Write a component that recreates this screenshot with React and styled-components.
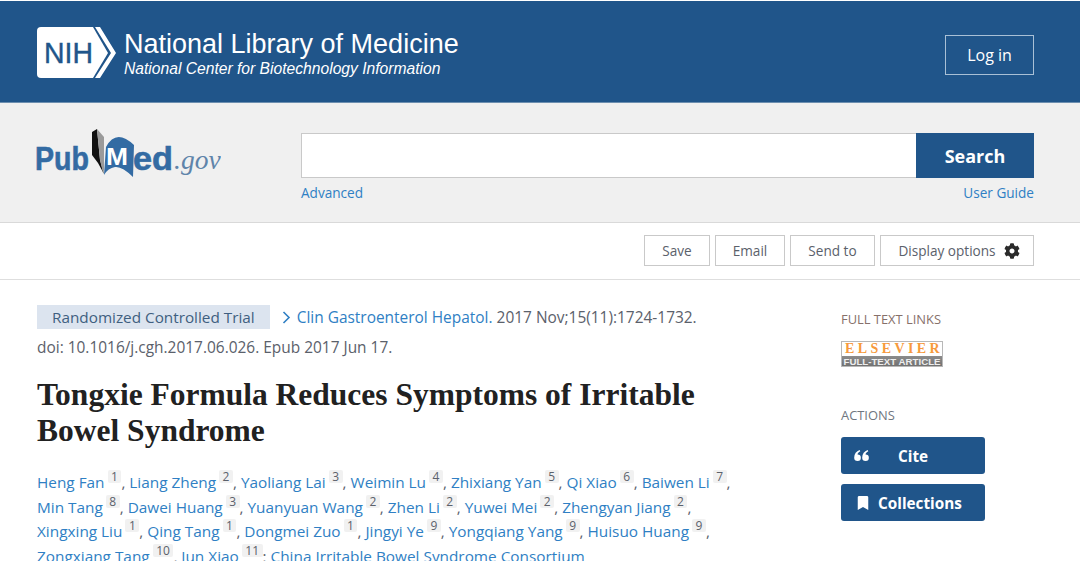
import React from 'react'
import styled, { createGlobalStyle } from 'styled-components'
import { FaBookmark, FaCog } from 'react-icons/fa'

const authors = [
  ['Heng Fan', 1], ['Liang Zheng', 2], ['Yaoliang Lai', 3], ['Weimin Lu', 4], ['Zhixiang Yan', 5],
  ['Qi Xiao', 6], ['Baiwen Li', 7], ['Min Tang', 8], ['Dawei Huang', 3], ['Yuanyuan Wang', 2],
  ['Zhen Li', 2], ['Yuwei Mei', 2], ['Zhengyan Jiang', 2], ['Xingxing Liu', 1], ['Qing Tang', 1],
  ['Dongmei Zuo', 1], ['Jingyi Ye', 9], ['Yongqiang Yang', 9], ['Huisuo Huang', 9],
  ['Zongxiang Tang', 10], ['Jun Xiao', 11],
]

const GlobalStyle = createGlobalStyle`
  html, body {
    margin: 0;
    height: 561px;
    overflow: hidden;
    background: #fff;
    font-family: "Open Sans", "Liberation Sans", sans-serif;
  }
`

const Masthead = styled.header`
  height: 101px;
  margin-top: 1px;
  padding: 0 46px 0 37px;
  background: #20558a;
  border-bottom: 1px solid #6d8fb0;
  display: flex;
  align-items: center;
  justify-content: space-between;
`

const Brand = styled.div`
  display: flex;
  align-items: center;
  gap: 7px;
  margin-top: 2px;
  color: #fff;
  font-family: "Liberation Sans", Arial, sans-serif;
`

const BrandText = styled.div`
  display: flex;
  flex-direction: column;
  margin-top: 2px;
`

const BrandName = styled.span`
  font-size: 27px;
  line-height: 30px;
`

const BrandSub = styled.span`
  margin-top: 1px;
  font-size: 15.65px;
  font-style: italic;
  line-height: 18px;
`

const LoginButton = styled.button`
  width: 89px;
  height: 40px;
  margin-top: 7px;
  padding: 0;
  background: transparent;
  border: 1px solid #a9c0d6;
  color: #fff;
  font: 16px "Open Sans", sans-serif;
`

const SearchBand = styled.section`
  height: 120px;
  padding: 30px 46px 0 35px;
  box-sizing: border-box;
  background: #f0f0f0;
  border-bottom: 1px solid #d9d9d9;
  display: flex;
`

const LogoWrap = styled.div`
  margin-top: -8px;
`

const SearchColumn = styled.div`
  width: 733px;
  margin-left: auto;
`

const SearchRow = styled.div`
  display: flex;
  height: 45px;
`

const SearchInput = styled.input`
  flex: 1;
  min-width: 0;
  box-sizing: border-box;
  background: #fff;
  border: 1px solid #c9c9c9;
  border-right: 0;
`

const SearchButton = styled.button`
  width: 118px;
  padding: 0;
  border: 0;
  background: #20558a;
  color: #fff;
  font: 700 18px "Open Sans", sans-serif;
`

const SearchLinks = styled.div`
  display: flex;
  justify-content: space-between;
  margin-top: 5px;
  font-size: 13.6px;
  line-height: 20px;
`

const Link = styled.a`
  color: #2f7fc4;
  text-decoration: none;
`

const Toolbar = styled.nav`
  height: 57px;
  padding: 0 46px 1px 0;
  box-sizing: border-box;
  border-bottom: 1px solid #dedede;
  display: flex;
  align-items: center;
  justify-content: flex-end;
  gap: 5px;
`

const ToolButton = styled.button`
  width: ${(props) => props.$width}px;
  height: 31px;
  padding: 0 0 0 ${(props) => props.$shift || 0}px;
  background: #fff;
  border: 1px solid #c9c9c9;
  color: #5b616b;
  font: 13.6px "Open Sans", sans-serif;
  display: flex;
  align-items: center;
  justify-content: center;
  gap: 8px;
  svg {
    color: #2b2b2b;
    font-size: 16px;
  }
`

const Content = styled.main`
  padding: 22px 46px 0 37px;
  display: flex;
  justify-content: space-between;
`

const Article = styled.article`
  width: 700px;
`

const Citation = styled.div`
  font-size: 15.45px;
  line-height: 30px;
  color: #5b616b;
`

const TypeBadge = styled.span`
  display: inline-block;
  height: 24px;
  padding: 0 15px;
  margin-right: 12px;
  background: #dce4ef;
  color: #3f5f80;
  font-size: 15.3px;
  line-height: 24px;
`

const Chevron = styled.svg`
  width: 9px;
  height: 13px;
  margin-right: 6px;
  vertical-align: -1px;
`

const Title = styled.h1`
  margin: 15px 0 0;
  font: 700 31.5px/36px "Liberation Serif", serif;
  color: #212121;
`

const Authors = styled.div`
  margin-top: 21px;
  font-size: 15.35px;
  line-height: 24.7px;
  color: #5b616b;
`

const Ref = styled.sup`
  display: inline-block;
  margin-left: 3px;
  padding: 0 3.5px;
  background: #f1f1f1;
  border-radius: 2px;
  font-size: 12px;
  line-height: 13px;
  vertical-align: 7px;
`

const Sidebar = styled.aside`
  width: 193px;
  padding-top: 9px;
`

const SideHeading = styled.h3`
  margin: 0;
  font-size: 12.9px;
  font-weight: 400;
  line-height: 16px;
  color: ${(props) => props.$color};
`

const ElsevierBadge = styled.div`
  width: 102px;
  height: 26px;
  margin: 14px 0 40px;
  border: 1px solid #b8b8b8;
  box-sizing: border-box;
  display: flex;
  flex-direction: column;
  overflow: hidden;
`

const ElsevierName = styled.span`
  flex: 1;
  background: #fff;
  color: #f79a3c;
  font: 700 14px/14px "Liberation Serif", serif;
  letter-spacing: 3.4px;
  text-indent: 3px;
  white-space: nowrap;
`

const ElsevierNote = styled.span`
  height: 11px;
  flex: none;
  background: linear-gradient(#8c8c8c, #6f6f6f);
  color: #eee;
  font: 700 9.7px/11px "Liberation Sans", sans-serif;
  text-align: center;
  white-space: nowrap;
`

const ActionButton = styled.button`
  width: 144px;
  height: 37px;
  margin-top: ${(props) => props.$top}px;
  padding: 0 ${(props) => props.$pad}px;
  border: 0;
  border-radius: 3px;
  background: #20558a;
  color: #fff;
  font: 700 15.3px "Open Sans", sans-serif;
  display: flex;
  align-items: center;
  gap: ${(props) => props.$gap}px;
  svg {
    font-size: 14px;
    flex: none;
  }
`

const QuoteIcon = () => (
  <svg width="15" height="11" viewBox="0 0 15 11" aria-hidden="true">
    <path d="M3.6 11A3.4 3.4 0 0 1 .2 7.4C.2 4 2.4 1.2 5.6 0L6.3 1.3C4.6 2.3 3.7 3.3 3.5 4.4A3.3 3.3 0 0 1 3.6 11Z" fill="#fff" />
    <path d="M11.6 11A3.4 3.4 0 0 1 8.2 7.4C8.2 4 10.4 1.2 13.6 0L14.3 1.3C12.6 2.3 11.7 3.3 11.5 4.4A3.3 3.3 0 0 1 11.6 11Z" fill="#fff" />
  </svg>
)

const NihLogo = () => (
  <svg width="80" height="52" viewBox="0 0 80 52" aria-hidden="true">
    <path d="M4 0H56L71 26L56 51H4Q0 51 0 47V4Q0 0 4 0Z" fill="#fff" />
    <path d="M58 0H63L79 26L63 51H58L74 26Z" fill="#fff" />
    <text x="7" y="36" fontFamily="Liberation Sans" fontSize="29.5" fill="#20558a" stroke="#20558a" strokeWidth="0.4" textLength="49" lengthAdjust="spacingAndGlyphs">NIH</text>
  </svg>
)

const PubMedLogo = () => (
  <svg width="186" height="56" viewBox="11 5 186 56" aria-hidden="true">
    <text x="11" y="50" fontFamily="Liberation Sans" fontWeight="700" fontSize="34" fill="#336ba3" stroke="#336ba3" strokeWidth="0.6" textLength="54" lengthAdjust="spacingAndGlyphs">Pub</text>
    <path d="M68 12L73 9L76 40L80 54L74 43L68 35Z" fill="#111" />
    <path d="M73 9L80 17L80 50L79 53L76 40Z" fill="#9a9a9a" />
    <path d="M80 55L82 27Q92 8 110 25L109 57Q98 46 91 47Q84 48 80 55Z" fill="#336ba3" />
    <text x="82" y="45" fontFamily="Liberation Sans" fontWeight="700" fontSize="24" fill="#fff" textLength="22" lengthAdjust="spacingAndGlyphs">M</text>
    <text x="109" y="50" fontFamily="Liberation Sans" fontWeight="700" fontSize="34" fill="#336ba3" stroke="#336ba3" strokeWidth="0.6" textLength="40" lengthAdjust="spacingAndGlyphs">ed</text>
    <text x="150" y="49" fontFamily="Liberation Serif" fontStyle="italic" fontSize="27.5" fill="#5f84aa">.gov</text>
  </svg>
)

const App = () => {
  return (
    <>
      <GlobalStyle />
      <Masthead>
        <Brand>
          <NihLogo />
          <BrandText>
            <BrandName>National Library of Medicine</BrandName>
            <BrandSub>National Center for Biotechnology Information</BrandSub>
          </BrandText>
        </Brand>
        <LoginButton>Log in</LoginButton>
      </Masthead>
      <SearchBand>
        <LogoWrap>
          <PubMedLogo />
        </LogoWrap>
        <SearchColumn>
          <SearchRow>
            <SearchInput />
            <SearchButton>Search</SearchButton>
          </SearchRow>
          <SearchLinks>
            <Link>Advanced</Link>
            <Link>User Guide</Link>
          </SearchLinks>
        </SearchColumn>
      </SearchBand>
      <Toolbar>
        <ToolButton $width={66}>Save</ToolButton>
        <ToolButton $width={70}>Email</ToolButton>
        <ToolButton $width={85}>Send to</ToolButton>
        <ToolButton $width={154} $shift={4}>Display options <FaCog /></ToolButton>
      </Toolbar>
      <Content>
        <Article>
          <Citation>
            <TypeBadge>Randomized Controlled Trial</TypeBadge>
            <Chevron viewBox="0 0 9 13" aria-hidden="true">
              <path d="M1.5 1L7 6.5L1.5 12" fill="none" stroke="#2f7fc4" strokeWidth="1.6" />
            </Chevron>
            <Link>Clin Gastroenterol Hepatol.</Link> 2017 Nov;15(11):1724-1732.
            <br />
            doi: 10.1016/j.cgh.2017.06.026. Epub 2017 Jun 17.
          </Citation>
          <Title>Tongxie Formula Reduces Symptoms of Irritable Bowel Syndrome</Title>
          <Authors>
            {authors.map(([name, ref]) => (
              <React.Fragment key={name}>
                <Link>{name}</Link>
                <Ref>{ref}</Ref>
                {ref === 11 ? '; ' : ', '}
              </React.Fragment>
            ))}
            <Link>China Irritable Bowel Syndrome Consortium</Link>
          </Authors>
        </Article>
        <Sidebar>
          <SideHeading $color="#86706a">FULL TEXT LINKS</SideHeading>
          <ElsevierBadge>
            <ElsevierName>ELSEVIER</ElsevierName>
            <ElsevierNote>FULL-TEXT ARTICLE</ElsevierNote>
          </ElsevierBadge>
          <SideHeading $color="#6f7680">ACTIONS</SideHeading>
          <ActionButton $top={14} $pad={13} $gap={29}><QuoteIcon /> Cite</ActionButton>
          <ActionButton $top={10} $pad={15} $gap={8}><FaBookmark /> Collections</ActionButton>
        </Sidebar>
      </Content>
    </>
  )
}

export default App
